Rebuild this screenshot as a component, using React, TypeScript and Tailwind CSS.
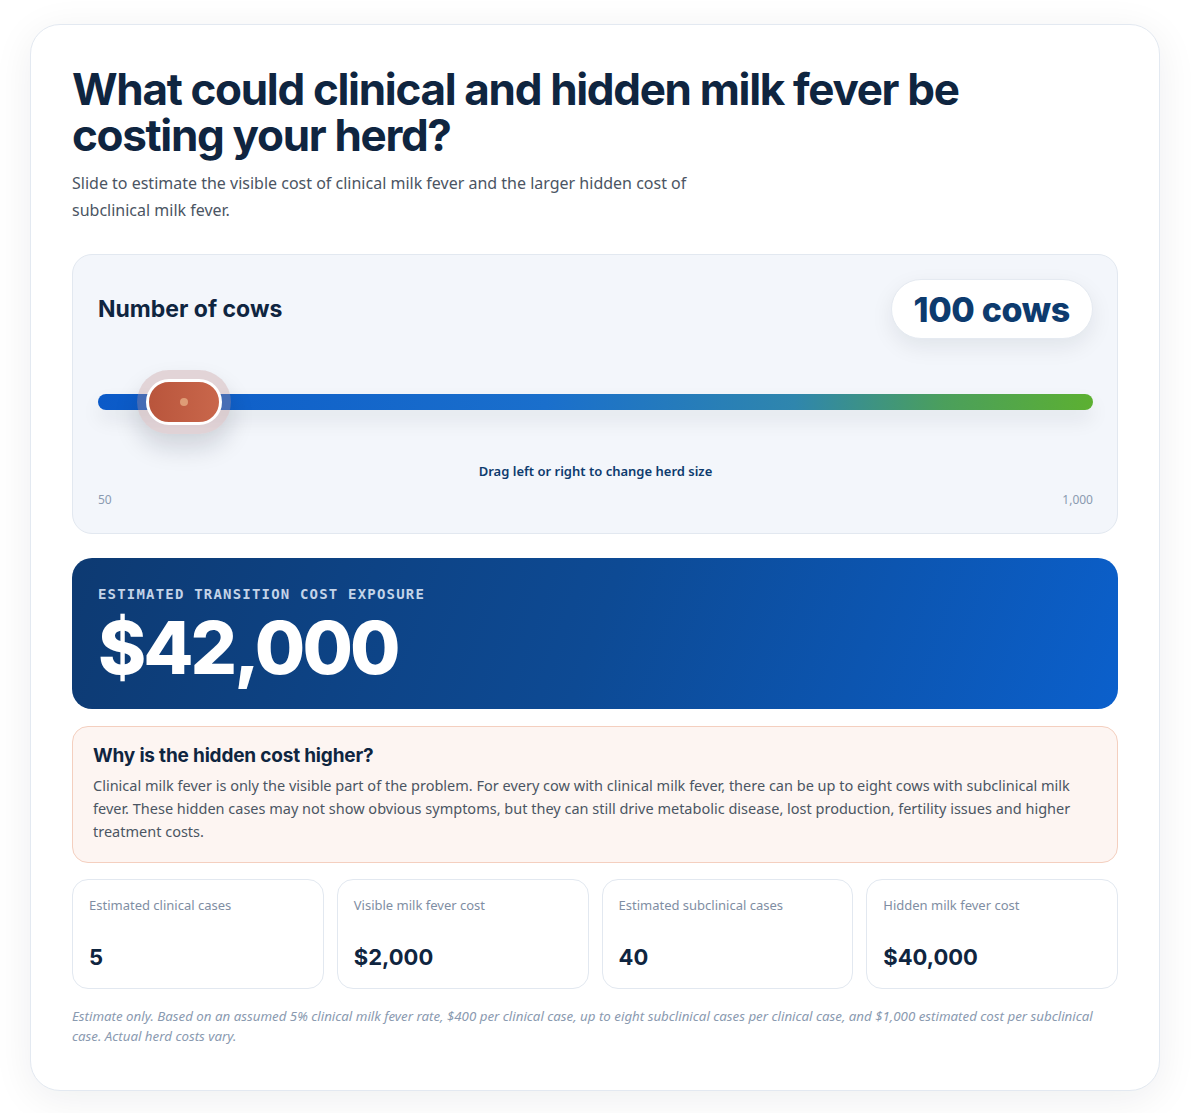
import { useState } from 'react';

const MIN = 50;
const MAX = 1000;

const body = { fontFamily: '"Noto Sans", "Liberation Sans", sans-serif' };
const head = { fontFamily: 'Inter, "Liberation Sans", sans-serif' };
const mono = { fontFamily: '"DejaVu Sans Mono", "Liberation Mono", monospace' };

function fmt(n: number) {
  return n.toLocaleString('en-US');
}

export default function App() {
  const [cows] = useState(100);

  const clinical = Math.round(cows * 0.05);
  const visible = clinical * 400;
  const subclinical = clinical * 8;
  const hidden = subclinical * 1000;
  const total = visible + hidden;
  const pct = (cows - MIN) / (MAX - MIN);

  const stats = [
    { label: 'Estimated clinical cases', value: fmt(clinical) },
    { label: 'Visible milk fever cost', value: '$' + fmt(visible) },
    { label: 'Estimated subclinical cases', value: fmt(subclinical) },
    { label: 'Hidden milk fever cost', value: '$' + fmt(hidden) },
  ];

  return (
    <div className="min-h-screen bg-white pt-6 pb-6" style={body}>
      <div className="ml-[30px] w-[1130px] rounded-[30px] border border-[#e3e9f1] bg-white px-[41px] pt-[41px] pb-[44px] shadow-[0_8px_40px_rgba(15,23,42,0.07)]">
        <h1
          className="text-[44px] font-bold leading-[46px] tracking-[-0.03em] text-[#0f2540]"
          style={head}
        >
          What could clinical and hidden milk fever be
          <br />
          costing your herd?
        </h1>
        <p className="mt-[12px] max-w-[640px] text-[16px] leading-[27px] text-[#4b5563]">
          Slide to estimate the visible cost of clinical milk fever and the larger hidden cost of subclinical milk fever.
        </p>

        {/* slider panel */}
        <div className="mt-[30px] rounded-[20px] border border-[#e2e8f0] bg-[#f3f6fb] pl-[25px] pr-[24px] pt-[24px] pb-[24px]">
          <div className="flex items-center justify-between">
            <div className="text-[23px] font-bold text-[#0f2540]" style={head}>
              Number of cows
            </div>
            <div
              className="flex h-[60px] items-center rounded-full border border-[#e5eaf1] bg-white px-[22px] text-[34px] font-extrabold tracking-[-0.01em] text-[#0d3b6e] shadow-[0_8px_22px_rgba(15,23,42,0.08)]"
              style={head}
            >
              {cows} cows
            </div>
          </div>

          <div className="relative mt-[55px] h-[16px] rounded-full bg-[linear-gradient(90deg,#0b5ac8_0%,#1a6fcc_45%,#2f86ad_70%,#4b9f5c_85%,#5cb031_100%)] shadow-[0_10px_20px_rgba(15,23,42,0.08)]">
            <div
              className="absolute top-1/2 -translate-x-1/2 -translate-y-1/2"
              style={{ left: `calc(${pct * 100}% + 34px)` }}
            >
              <div className="rounded-full bg-[rgba(190,140,140,0.32)] p-[9px] shadow-[0_14px_24px_rgba(15,23,42,0.15)]">
                <div className="flex h-[46px] w-[76px] items-center justify-center rounded-full border-[3px] border-white bg-[linear-gradient(90deg,#b9553c,#c9674b)]">
                  <div className="h-[8px] w-[8px] rounded-full bg-[#de9c76]" />
                </div>
              </div>
            </div>
          </div>

          <div className="mt-[52px] text-center text-[13px] font-semibold text-[#0d3b6e]">
            Drag left or right to change herd size
          </div>
          <div className="mt-[9px] flex justify-between text-[12px] text-[#8a9ab0]">
            <span>50</span>
            <span>1,000</span>
          </div>
        </div>

        {/* total */}
        <div className="mt-[24px] h-[151px] rounded-[20px] bg-[linear-gradient(110deg,#0d3a72_0%,#0d4a94_50%,#0b60cc_100%)] px-[26px] pt-[26px]">
          <div className="text-[14px] font-bold tracking-[0.085em] text-[#c3d3e8]" style={mono}>
            ESTIMATED TRANSITION COST EXPOSURE
          </div>
          <div
            className="mt-[2px] text-[73px] font-extrabold leading-[82px] tracking-[-0.04em] text-white"
            style={head}
          >
            ${fmt(total)}
          </div>
        </div>

        {/* why */}
        <div className="mt-[17px] rounded-[16px] border border-[#f4cfbf] bg-[#fdf5f2] px-[20px] pt-[15px] pb-[19px]">
          <h2 className="text-[19px] font-bold tracking-[-0.01em] text-[#0f2540]" style={head}>
            Why is the hidden cost higher?
          </h2>
          <p className="mt-[4px] text-[14.5px] leading-[23px] text-[#4b5563]">
            Clinical milk fever is only the visible part of the problem. For every cow with clinical milk fever, there can be up to eight cows with subclinical milk fever. These hidden cases may not show obvious symptoms, but they can still drive metabolic disease, lost production, fertility issues and higher treatment costs.
          </p>
        </div>

        {/* stats */}
        <div className="mt-[16px] grid grid-cols-4 gap-[13px]">
          {stats.map(s => (
            <div key={s.label} className="h-[110px] rounded-[16px] border border-[#e2e8f0] bg-white px-[16px] pt-[16px]">
              <div className="text-[13px] text-[#7f8ea3]">{s.label}</div>
              <div className="mt-[25px] text-[22px] font-bold text-[#0f2540]" style={head}>
                {s.value}
              </div>
            </div>
          ))}
        </div>

        <p className="mt-[17px] text-[13.3px] italic leading-[20px] text-[#8a9ab0]">
          Estimate only. Based on an assumed 5% clinical milk fever rate, $400 per clinical case, up to eight subclinical cases per clinical case, and $1,000 estimated cost per subclinical case. Actual herd costs vary.
        </p>
      </div>
    </div>
  );
}
